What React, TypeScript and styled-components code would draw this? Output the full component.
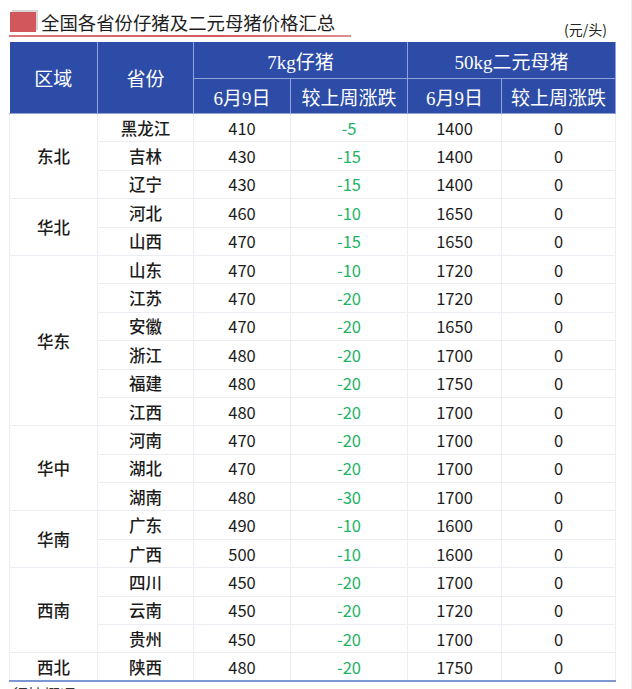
import React from "react";
import styled, { createGlobalStyle } from "styled-components";

interface Row {
    province: string;
    pig: number;
    pigChg: number;
    sow: number;
    sowChg: number;
}

interface Group {
    region: string;
    rows: Row[];
}

const groups: Group[] = [
    {region: "东北", rows: [
        {province: "黑龙江", pig: 410, pigChg: -5, sow: 1400, sowChg: 0},
        {province: "吉林", pig: 430, pigChg: -15, sow: 1400, sowChg: 0},
        {province: "辽宁", pig: 430, pigChg: -15, sow: 1400, sowChg: 0},
    ]},
    {region: "华北", rows: [
        {province: "河北", pig: 460, pigChg: -10, sow: 1650, sowChg: 0},
        {province: "山西", pig: 470, pigChg: -15, sow: 1650, sowChg: 0},
    ]},
    {region: "华东", rows: [
        {province: "山东", pig: 470, pigChg: -10, sow: 1720, sowChg: 0},
        {province: "江苏", pig: 470, pigChg: -20, sow: 1720, sowChg: 0},
        {province: "安徽", pig: 470, pigChg: -20, sow: 1650, sowChg: 0},
        {province: "浙江", pig: 480, pigChg: -20, sow: 1700, sowChg: 0},
        {province: "福建", pig: 480, pigChg: -20, sow: 1750, sowChg: 0},
        {province: "江西", pig: 480, pigChg: -20, sow: 1700, sowChg: 0},
    ]},
    {region: "华中", rows: [
        {province: "河南", pig: 470, pigChg: -20, sow: 1700, sowChg: 0},
        {province: "湖北", pig: 470, pigChg: -20, sow: 1700, sowChg: 0},
        {province: "湖南", pig: 480, pigChg: -30, sow: 1700, sowChg: 0},
    ]},
    {region: "华南", rows: [
        {province: "广东", pig: 490, pigChg: -10, sow: 1600, sowChg: 0},
        {province: "广西", pig: 500, pigChg: -10, sow: 1600, sowChg: 0},
    ]},
    {region: "西南", rows: [
        {province: "四川", pig: 450, pigChg: -20, sow: 1700, sowChg: 0},
        {province: "云南", pig: 450, pigChg: -20, sow: 1720, sowChg: 0},
        {province: "贵州", pig: 450, pigChg: -20, sow: 1700, sowChg: 0},
    ]},
    {region: "西北", rows: [
        {province: "陕西", pig: 480, pigChg: -20, sow: 1750, sowChg: 0},
    ]},
];

const GlobalStyle = createGlobalStyle`
    html, body {
        margin: 0;
        padding: 0;
        background: #ffffff;
        overflow: hidden;
    }
    body {
        font-family: "Noto Sans CJK SC", "Noto Sans", sans-serif;
    }
`;

const Page = styled.div`
    width: 632px;
    height: 689px;
    box-sizing: border-box;
    padding: 12px 17px 0 9px;
    border-right: 1px solid #eeeef2;
    overflow: hidden;
`;

const TitleRow = styled.div`
    display: flex;
    align-items: flex-end;
    justify-content: space-between;
`;

const TitleBlock = styled.div`
    display: flex;
    flex-direction: column;
    width: 342px;
`;

const TitleLine = styled.div`
    display: flex;
    align-items: center;
    gap: 5px;
    padding-left: 1px;
    height: 20px;
`;

const Marker = styled.span`
    width: 26px;
    height: 20px;
    background: #d2575c;
    box-shadow: 2px -2px 0 #d6d6d8;
`;

const TitleText = styled.span`
    font-size: 18.4px;
    color: #1e1e1e;
    line-height: 20px;
`;

const Underline = styled.div`
    margin-top: 3px;
    height: 2px;
    background: linear-gradient(90deg, #d9787c 0%, #d4575d 60%, #e08d90 100%);
`;

const Unit = styled.span`
    font-size: 14px;
    color: #222;
    margin-bottom: -2px;
    margin-right: 7px;
`;

const Table = styled.table`
    margin-top: 5px;
    width: 606px;
    border-collapse: collapse;
    table-layout: fixed;
    border-bottom: 2px solid #7e97d3;
`;

const HeadCell = styled.th<{ $h: number }>`
    background: #2c4ca7;
    color: #ffffff;
    font-family: "Liberation Serif", "Noto Sans CJK SC", serif;
    font-weight: normal;
    font-size: 19px;
    height: ${({$h}) => $h}px;
    padding: 0;
    border: 1px solid #8fa3d8;
    border-top: none;
    &:first-child {
        border-left: none;
    }
`;

const BodyRow = styled.tr`
    height: 28.4px;
`;

const Cell = styled.td<{ $green?: boolean; $strong?: boolean }>`
    padding: 0;
    text-align: center;
    font-size: 16.5px;
    line-height: 20px;
    color: ${({$green}) => ($green ? "#22b263" : "#1c1c1c")};
    font-weight: ${({$strong}) => ($strong ? 500 : 400)};
    border: 1px solid #ececf3;
`;

const Footer = styled.div`
    margin-top: 2px;
    padding-left: 3px;
    font-size: 16px;
    color: #333;
    line-height: 20px;
`;

const fmt = (n: number) => (n > 0 ? `+${n}` : `${n}`);

export default function App() {
    return (
        <Page>
            <GlobalStyle/>
            <TitleRow>
                <TitleBlock>
                    <TitleLine>
                        <Marker/>
                        <TitleText>全国各省份仔猪及二元母猪价格汇总</TitleText>
                    </TitleLine>
                    <Underline/>
                </TitleBlock>
                <Unit>(元/头)</Unit>
            </TitleRow>
            <Table>
                <colgroup>
                    <col style={{width: 88}}/>
                    <col style={{width: 96}}/>
                    <col style={{width: 97}}/>
                    <col style={{width: 117}}/>
                    <col style={{width: 94}}/>
                    <col style={{width: 114}}/>
                </colgroup>
                <thead>
                <tr>
                    <HeadCell $h={36} rowSpan={2}>区域</HeadCell>
                    <HeadCell $h={36} rowSpan={2}>省份</HeadCell>
                    <HeadCell $h={36} colSpan={2}>7kg仔猪</HeadCell>
                    <HeadCell $h={36} colSpan={2}>50kg二元母猪</HeadCell>
                </tr>
                <tr>
                    <HeadCell $h={34}>6月9日</HeadCell>
                    <HeadCell $h={34}>较上周涨跌</HeadCell>
                    <HeadCell $h={34}>6月9日</HeadCell>
                    <HeadCell $h={34}>较上周涨跌</HeadCell>
                </tr>
                </thead>
                <tbody>
                {groups.map((g) =>
                    g.rows.map((r, i) => (
                        <BodyRow key={r.province}>
                            {i === 0 && <Cell $strong rowSpan={g.rows.length}>{g.region}</Cell>}
                            <Cell $strong>{r.province}</Cell>
                            <Cell>{r.pig}</Cell>
                            <Cell $green={r.pigChg < 0}>{fmt(r.pigChg)}</Cell>
                            <Cell>{r.sow}</Cell>
                            <Cell>{r.sowChg}</Cell>
                        </BodyRow>
                    ))
                )}
                </tbody>
            </Table>
            <Footer>行情概况</Footer>
        </Page>
    );
}
